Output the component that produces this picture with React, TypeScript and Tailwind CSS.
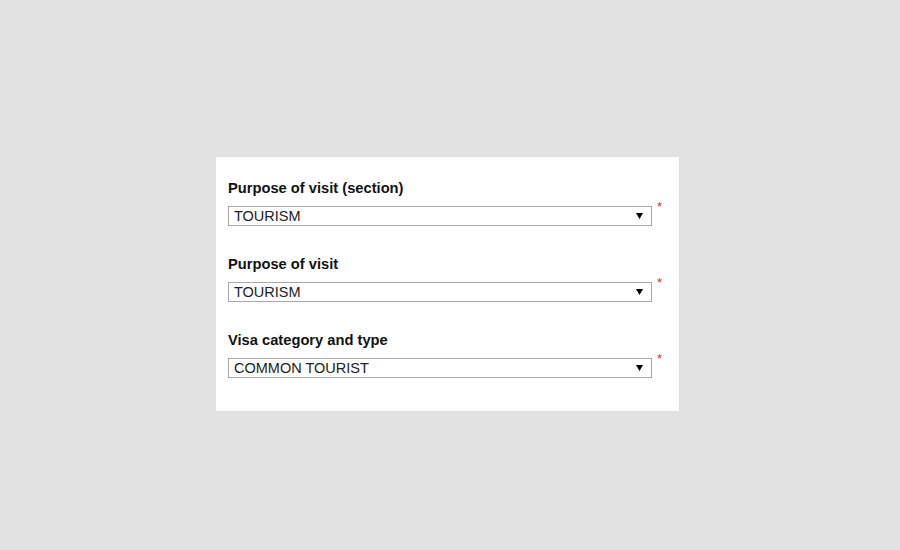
import React from 'react';

const fields = [
  { label: 'Purpose of visit (section)', value: 'TOURISM' },
  { label: 'Purpose of visit', value: 'TOURISM' },
  { label: 'Visa category and type', value: 'COMMON TOURIST' },
];

function SelectField({ label, value }: { label: string; value: string }) {
  return (
    <div className="flex flex-col">
      <label className="text-[14.7px] font-bold leading-[17px] text-[#111]">{label}</label>
      <div className="mt-[9px] flex items-start">
        <div className="flex h-[20px] w-[424px] items-center justify-between border border-[#a9a9a9] bg-white pl-[5px] pr-[8px]">
          <span className="text-[14.5px] leading-[16px] text-[#222]">{value}</span>
          <svg width="7" height="6" viewBox="0 0 7 6">
            <path d="M0 0h7L3.5 6z" fill="#000" />
          </svg>
        </div>
        <span className="-mt-[6px] ml-[5px] text-[13px] leading-[14px] text-[#e02a2a]">*</span>
      </div>
    </div>
  );
}

export default function App() {
  return (
    <div
      className="min-h-[550px] w-full bg-[#e1e1e1] pl-[216px] pt-[157px]"
      style={{ fontFamily: '"Liberation Sans", Arial, sans-serif' }}
    >
      <div className="flex w-[463px] flex-col gap-[30px] bg-white pb-[33px] pl-[12px] pt-[23px]">
        {fields.map((f) => (
          <SelectField key={f.label} label={f.label} value={f.value} />
        ))}
      </div>
    </div>
  );
}
